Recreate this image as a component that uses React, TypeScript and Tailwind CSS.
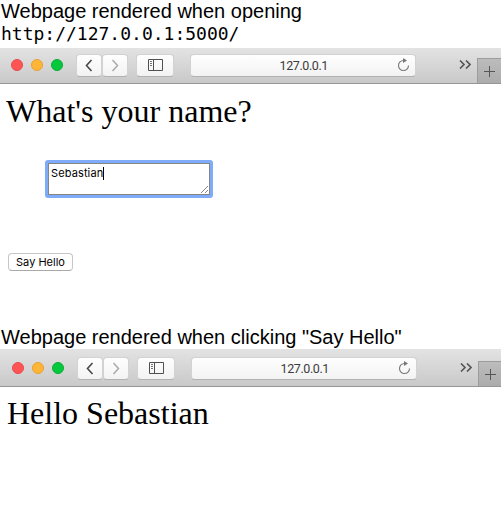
import React from "react";

const button =
  "flex h-[23px] items-center justify-center rounded-[4px] border border-[#d2d2d2] border-b-[#b2b2b2] bg-gradient-to-b from-[#fefefe] to-[#f3f3f3]";

function Dot({ className }: { className: string }) {
  return <span className={`h-3 w-3 rounded-full border ${className}`} />;
}

function BrowserBar({ className }: { className: string }) {
  return (
    <div
      className={`flex shrink-0 items-start border-b border-[#969696] bg-gradient-to-b from-[#e3e3e3] to-[#c9c9c9] ${className}`}
    >
      <div className="mt-[11px] flex gap-2">
        <Dot className="border-[#e9494b] bg-[#ff5454]" />
        <Dot className="border-[#e9a032] bg-[#ffb638]" />
        <Dot className="border-[#08ae32] bg-[#05c83c]" />
      </div>
      <div className="mt-[5.5px] ml-[13px] flex">
        <div className={`${button} w-[26px]`}>
          <svg width="8" height="13" viewBox="0 0 8 13" fill="none" stroke="#494949" strokeWidth="1.6">
            <path d="M6.5 1 1.5 6.5l5 5.5" />
          </svg>
        </div>
        <div className={`${button} w-[26px]`}>
          <svg width="8" height="13" viewBox="0 0 8 13" fill="none" stroke="#aaa" strokeWidth="1.5">
            <path d="m1.5 1 5 5.5-5 5.5" />
          </svg>
        </div>
      </div>
      <div className={`${button} mt-[5.5px] ml-2 w-[38px]`}>
        <svg width="15" height="12" viewBox="0 0 15 12" fill="none" stroke="#505050">
          <path d="M.5.5h14v11H.5zM5.5.5v11" />
          <path d="M2 2.5h2M2 4.5h2M2 6.5h2" strokeWidth=".8" />
        </svg>
      </div>
      <div className={`${button} mt-[5.5px] ml-4 w-[226px] pr-[5px]`}>
        <span className="ml-[88.5px] flex-1 font-['Roboto',sans-serif] text-[12.5px] leading-[21px] tracking-[-0.4px] text-[#3c3c3c]">
          127.0.0.1
        </span>
        <svg width="13" height="14" viewBox="0 0 13 14" fill="none" stroke="#777" strokeWidth="1.1">
          <path d="M6.5 2.5A5 5 0 1 0 11.5 7.5" />
          <path d="M6 0v5l4-2.5z" fill="#777" stroke="none" />
        </svg>
      </div>
      <svg className="mt-[12px] ml-[43px]" width="12" height="9" viewBox="0 0 12 9" fill="none" stroke="#555" strokeWidth="1.6">
        <path d="m1 .5 4 4-4 4M7 .5l4 4-4 4" />
      </svg>
      <div className="ml-[6px] flex h-[25px] flex-1 items-center self-end border-t border-l border-[#9d9d9d] bg-gradient-to-b from-[#bcbcbc] to-[#acacac] pl-[5px]">
        <svg width="13" height="13" viewBox="0 0 13 13" stroke="#555">
          <path d="M1 6.5h11M6.5 1v11" />
        </svg>
      </div>
    </div>
  );
}

export default function App() {
  return (
    <main className="flex h-[528px] w-[501px] flex-col overflow-hidden bg-white text-black">
      <header className="h-12 shrink-0 pl-px font-['Liberation_Sans',Arial,sans-serif] text-[20px] leading-[23px]">
        <p>Webpage rendered when opening</p>
        <p className="font-['DejaVu_Sans_Mono',monospace] text-[18px] leading-[22px]">http://127.0.0.1:5000/</p>
      </header>
      <BrowserBar className="h-9 pl-[11px]" />
      <section className="flex h-[242px] shrink-0 flex-col items-start">
        <h1 className="mt-[9px] ml-[6px] font-['Liberation_Serif',serif] text-[32px] leading-9">What's your name?</h1>
        <div className="mt-[31px] ml-[45px] flex h-[38px] w-[168px] rounded-[3px] bg-[#7facf8] p-[3px]">
          <div className="flex flex-1 items-start justify-between border border-[#858585] bg-white pl-[2px]">
            <span className="mt-[3px] border-r border-black font-['Inter',sans-serif] text-[11px] leading-[13px] tracking-[0.12px]">
              Sebastian
            </span>
            <svg className="self-end" width="9" height="9" viewBox="0 0 9 9" stroke="#777" strokeWidth=".9">
              <path d="m1 8 7-7M5 8l3-3" />
            </svg>
          </div>
        </div>
        <div className="mt-[55px] ml-2 flex h-[18px] w-[65px] items-center justify-center rounded-[4px] border border-[#c6c6c6] border-b-[#aaa] bg-white font-['Inter',sans-serif] text-[11px] leading-4">
          Say Hello
        </div>
      </section>
      <h2 className="h-[23px] shrink-0 pl-px font-['Liberation_Sans',Arial,sans-serif] text-[20px] leading-[23px]">
        Webpage rendered when clicking "Say Hello"
      </h2>
      <BrowserBar className="h-[38px] pt-[2px] pl-3" />
      <h1 className="mt-2 ml-[7px] font-['Liberation_Serif',serif] text-[32px] leading-9">Hello Sebastian</h1>
    </main>
  );
}
